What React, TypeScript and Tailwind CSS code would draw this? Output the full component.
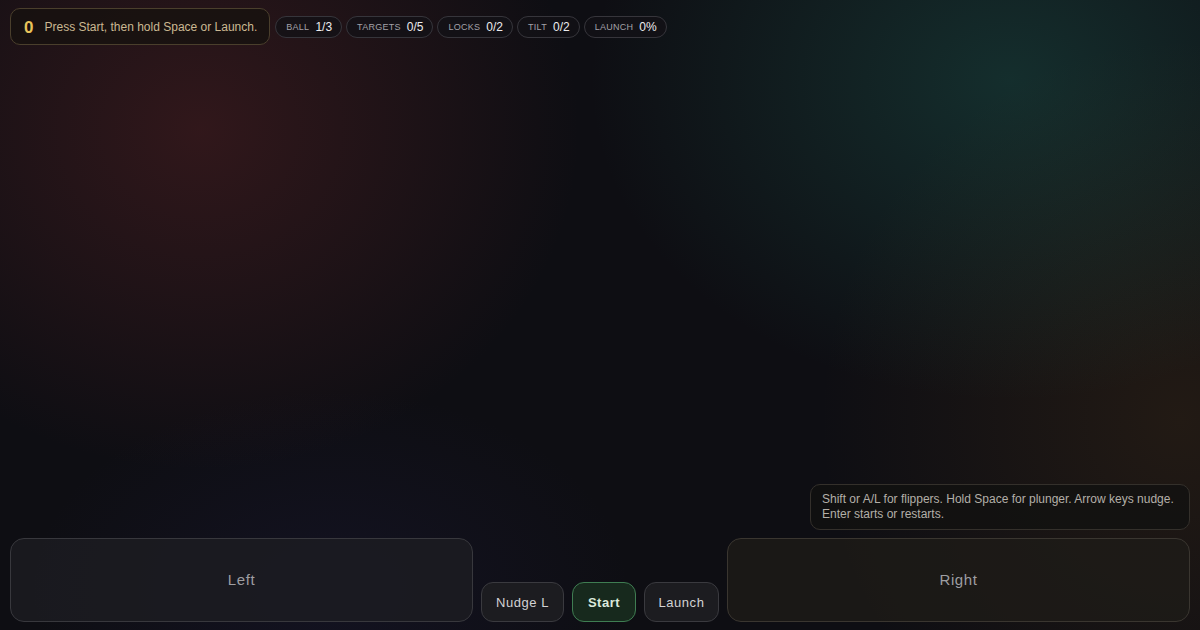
import React from "react";

const stats: [string, string][] = [
  ["Ball", "1/3"],
  ["Targets", "0/5"],
  ["Locks", "0/2"],
  ["Tilt", "0/2"],
  ["Launch", "0%"],
];

export default function App() {
  return (
    <div
      className="relative flex h-[630px] w-[1200px] flex-col justify-between overflow-hidden bg-[#0e0e13] font-['Liberation_Sans',Arial,sans-serif]"
    >
      <div className="pointer-events-none absolute inset-0 bg-[radial-gradient(ellipse_380px_340px_at_200px_130px,rgba(130,45,45,0.30),transparent),radial-gradient(ellipse_420px_320px_at_1010px_80px,rgba(35,120,105,0.30),transparent),radial-gradient(ellipse_360px_380px_at_1180px_420px,rgba(125,80,25,0.18),transparent),radial-gradient(ellipse_300px_200px_at_330px_590px,rgba(50,45,120,0.14),transparent)]" />

      <div className="relative flex items-center gap-[5px] px-2.5 pt-2">
        <div className="flex h-[37px] items-center gap-[11px] rounded-[10px] border border-[#4a3f2c] bg-[#16120f]/80 pl-[13px] pr-3">
          <span className="pt-px text-[17px] font-bold leading-none text-[#e8c35a]">0</span>
          <span className="pt-px text-[12px] text-[#cbb892]">Press Start, then hold Space or Launch.</span>
        </div>
        <div className="flex items-center gap-1">
          {stats.map(([label, value]) => (
            <div
              key={label}
              className="flex h-[22px] items-center gap-1.5 rounded-full border border-[#36353b] bg-[#131217]/80 pl-2.5 pr-[9px] pt-px"
            >
              <span className="pt-[2px] text-[9px] uppercase tracking-[0.03em] text-[#a3a1a8]">{label}</span>
              <span className="text-[12px] text-[#ececee]">{value}</span>
            </div>
          ))}
        </div>
      </div>

      <div className="relative flex flex-col px-2.5 pb-2">
        <div className="mb-2 ml-auto w-[380px] rounded-[10px] border border-[#34302b] bg-[#121110]/80 px-[11px] py-[7px] text-[12px] leading-[15px] text-[#b3afa8]">
          Shift or A/L for flippers. Hold Space for plunger. Arrow keys nudge. Enter starts or restarts.
        </div>
        <div className="flex items-end gap-2">
          <button className="flex h-[84px] flex-1 items-center justify-center rounded-[14px] border border-[#38383d] bg-[#1d1d22]/80 pt-px text-[15px] tracking-[0.04em] text-[#9e9ea2]">
            Left
          </button>
          <button className="flex h-[40px] w-[83px] items-center justify-center rounded-[12px] border border-[#3a3a3f] bg-[#1c1c20] pt-px text-[13px] tracking-[0.04em] text-[#d2d2d4]">
            Nudge L
          </button>
          <button className="flex h-[40px] w-[64px] items-center justify-center rounded-[12px] border border-[#3f7d52] bg-[#17291d] pt-px text-[13px] font-bold tracking-[0.04em] text-[#dbe9dc]">
            Start
          </button>
          <button className="flex h-[40px] w-[75px] items-center justify-center rounded-[12px] border border-[#3a3a3f] bg-[#1c1c20] pt-px text-[13px] tracking-[0.04em] text-[#d2d2d4]">
            Launch
          </button>
          <button className="flex h-[84px] flex-1 items-center justify-center rounded-[14px] border border-[#3a3630] bg-[#1e1b18]/80 pt-px text-[15px] tracking-[0.04em] text-[#9e9ea2]">
            Right
          </button>
        </div>
      </div>
    </div>
  );
}
